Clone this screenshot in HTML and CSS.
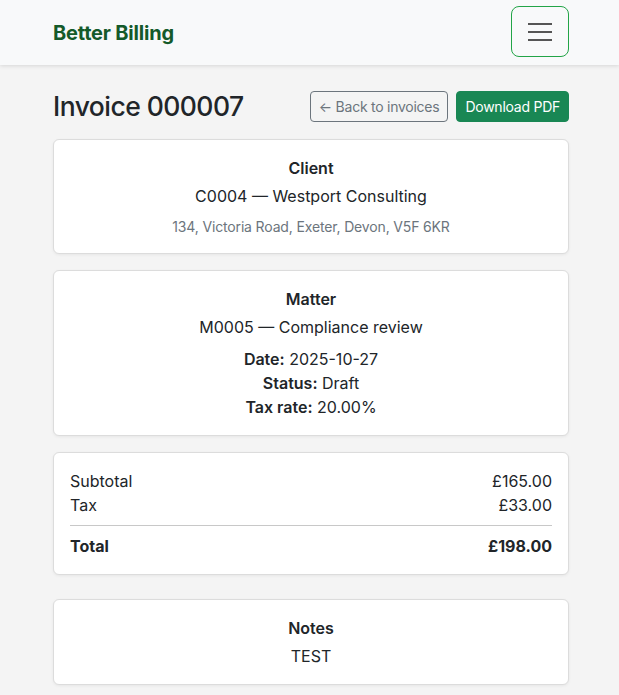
FILE: index.html
```html
<!DOCTYPE html>
<html lang="en">
<head>
<meta charset="utf-8">
<title>Invoice 000007 — Better Billing</title>
<link rel="stylesheet" href="styles.css">
</head>
<body>
<nav class="navbar">
  <a class="brand" href="#">Better Billing</a>
  <button class="toggler" type="button" aria-label="Toggle navigation">
    <svg width="24" height="18" viewBox="0 0 24 18" aria-hidden="true">
      <path d="M0 1h24M0 9h24M0 17h24" stroke="#555" stroke-width="2" fill="none"/>
    </svg>
  </button>
</nav>
<main class="container">
  <div class="title-row">
    <h2 class="title">Invoice 000007</h2>
    <div class="actions">
      <a class="btn btn-outline" href="#">← Back to invoices</a>
      <a class="btn btn-green" href="#">Download PDF</a>
    </div>
  </div>

  <section class="card center">
    <div class="card-title">Client</div>
    <div class="line mb2">C0004 — Westport Consulting</div>
    <div class="muted">134, Victoria Road, Exeter, Devon, V5F 6KR</div>
  </section>

  <section class="card center">
    <div class="card-title">Matter</div>
    <div class="line mb2">M0005 — Compliance review</div>
    <div class="line"><strong>Date:</strong> 2025-10-27</div>
    <div class="line"><strong>Status:</strong> Draft</div>
    <div class="line"><strong>Tax rate:</strong> 20.00%</div>
  </section>

  <section class="card totals">
    <div class="row"><span>Subtotal</span><span>£165.00</span></div>
    <div class="row"><span>Tax</span><span>£33.00</span></div>
    <hr class="divider">
    <div class="row bold"><span>Total</span><span>£198.00</span></div>
  </section>

  <section class="card center notes">
    <div class="card-title">Notes</div>
    <div class="line">TEST</div>
  </section>
</main>
</body>
</html>
```
FILE: styles.css
```css
* { box-sizing: border-box; }
html, body { margin: 0; padding: 0; }
body {
  background: #f4f4f4;
  color: #212529;
  font-family: Inter, "Noto Sans", "DejaVu Sans", sans-serif;
  font-size: 16px;
  line-height: 1.5;
}
.navbar {
  height: 65px;
  background: #f8f9fa;
  display: flex;
  align-items: center;
  justify-content: space-between;
  padding: 0 50px 2px 53px;
  box-shadow: 0 1px 4px rgba(0,0,0,0.12);
  position: relative;
}
.brand {
  color: #145a2a;
  font-weight: 700;
  font-size: 20px;
  text-decoration: none;
  letter-spacing: -0.2px;
  margin-top: 2px;
}
.toggler {
  width: 58px;
  height: 51px;
  border: 1px solid #22a447;
  border-radius: 8px;
  background: transparent;
  display: flex;
  align-items: center;
  justify-content: center;
  padding: 0;
}
.container {
  padding: 26px 50px 24px 53px;
}
.title-row {
  display: flex;
  align-items: center;
  justify-content: space-between;
  margin-bottom: 16px;
}
.title {
  margin: 0;
  font-size: 26.5px;
  font-weight: 500;
  line-height: 1.2;
  letter-spacing: -0.55px;
}
.actions { display: flex; gap: 8px; }
.btn {
  display: inline-block;
  font-size: 14px;
  line-height: 21px;
  padding: 4px 8px;
  border-radius: 4px;
  text-decoration: none;
  border: 1px solid transparent;
  letter-spacing: -0.25px;
}
.btn-outline { color: #6c757d; border-color: #6c757d; }
.btn-green { color: #fff; background: #198754; border-color: #198754; }
.card {
  background: #fff;
  border: 1px solid #dcdcdc;
  border-radius: 6px;
  padding: 16px;
  margin-bottom: 16px;
  box-shadow: 0 1px 3px rgba(0,0,0,0.06);
}
.card.notes { margin-top: 24px; }
.center { text-align: center; }
.card-title { font-weight: 600; margin-bottom: 4px; }
.mb2 { margin-bottom: 8px; }
.muted { color: #6c757d; font-size: 14px; line-height: 21px; letter-spacing: -0.15px; }
strong { font-weight: 600; }
.row { display: flex; justify-content: space-between; }
.bold { font-weight: 700; }
.divider { border: 0; border-top: 1px solid #c8c8c8; margin: 8px 0; }
```
